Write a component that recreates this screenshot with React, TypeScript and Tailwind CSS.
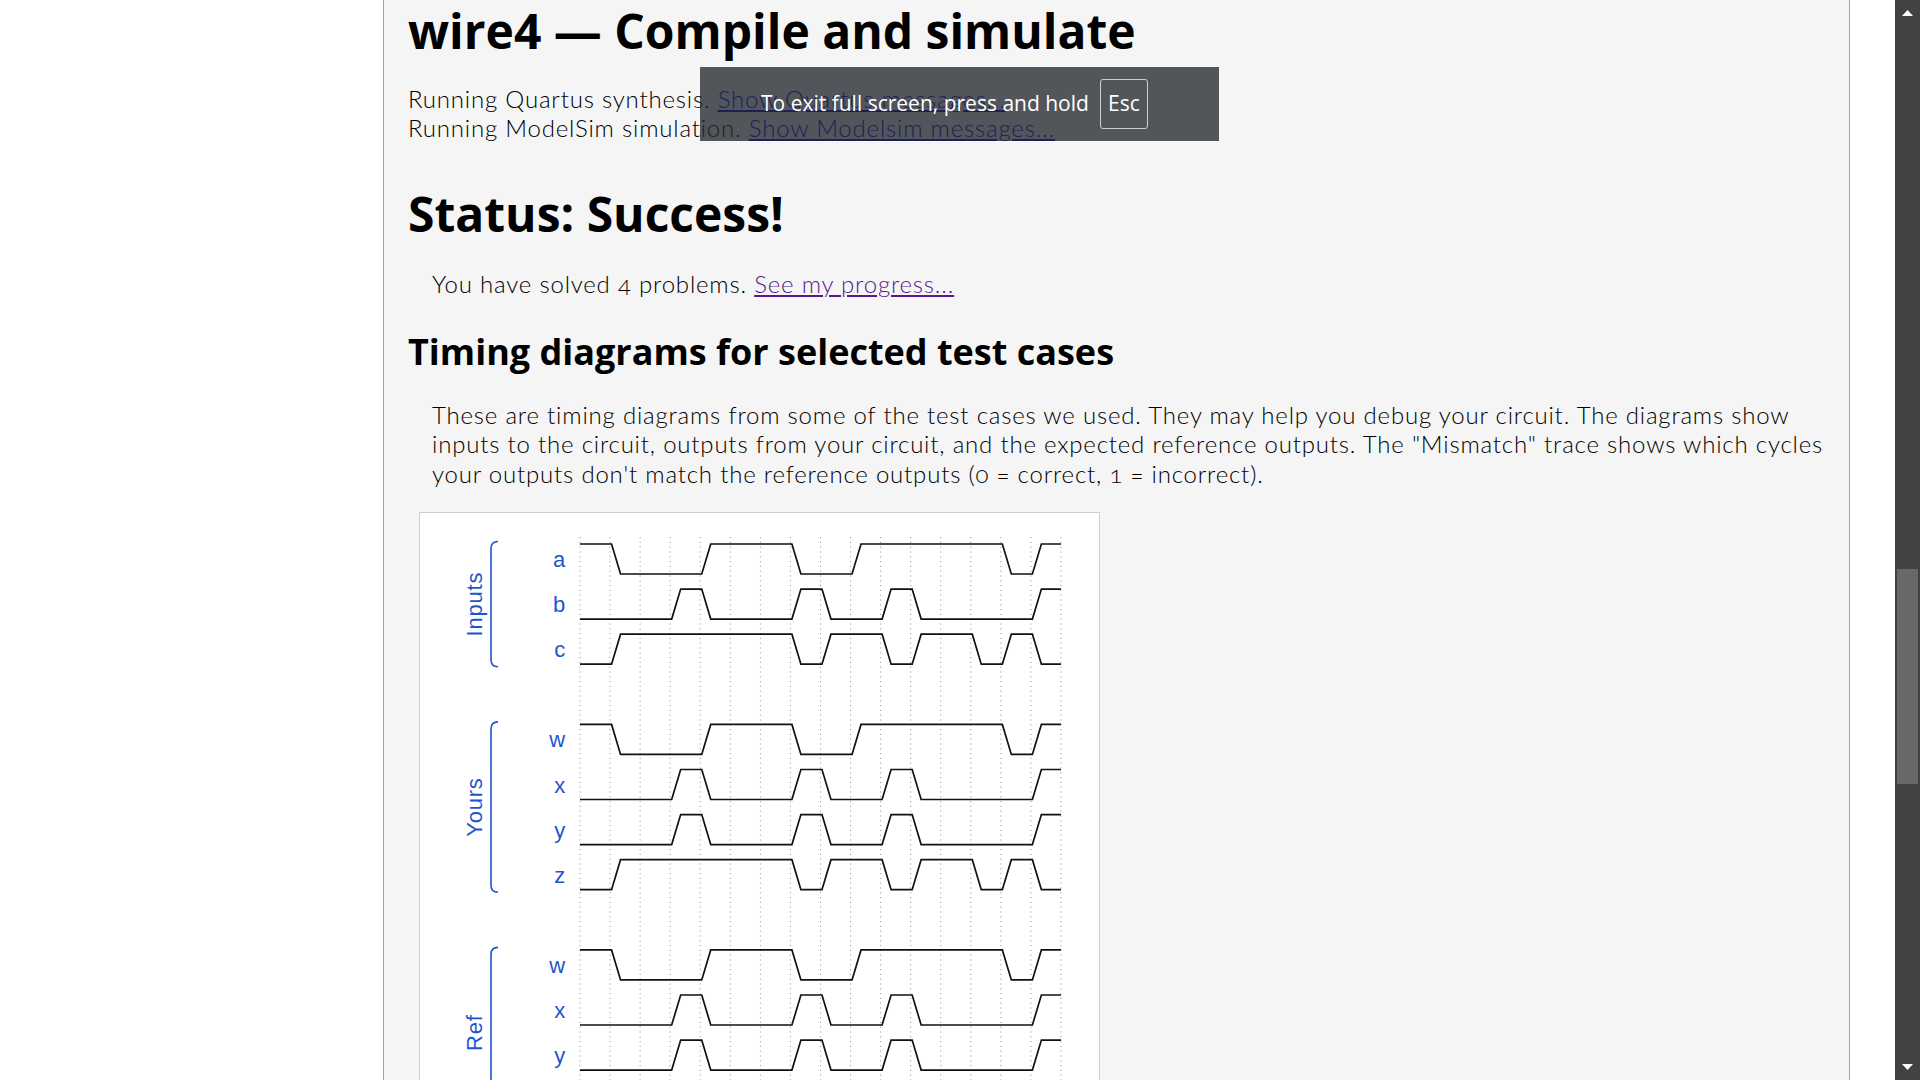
import React from "react";

const GX0 = 160;
const GP = 30.06;
const ROW0 = 31;
const PITCH = 45.1;
const AMP = 30;
const BLUE = "#1c56cc";

const gx = (i: number) => GX0 + GP * i;
const rowTop = (k: number) => ROW0 + PITCH * k;

const a = [1, 0, 0, 0, 1, 1, 1, 0, 0, 1, 1, 1, 1, 1, 0, 1];
const b = [0, 0, 0, 1, 0, 0, 0, 1, 0, 0, 1, 0, 0, 0, 0, 1];
const c = [0, 1, 1, 1, 1, 1, 1, 0, 1, 1, 0, 1, 1, 0, 1, 0];
const zero = Array(16).fill(0);

const groups = [
  { name: "Inputs", start: 0, rows: [["a", a], ["b", b], ["c", c]] as [string, number[]][] },
  { name: "Yours", start: 4, rows: [["w", a], ["x", b], ["y", b], ["z", c]] as [string, number[]][] },
  { name: "Ref", start: 9, rows: [["w", a], ["x", b], ["y", b], ["z", c]] as [string, number[]][] },
  { name: "Mismatch", start: 14, rows: [["", zero]] as [string, number[]][] },
];

function wavePath(vals: number[], k: number) {
  const top = rowTop(k);
  const yOf = (v: number) => (v ? top : top + AMP);
  let d = `M${gx(0)} ${yOf(vals[0])}`;
  for (let i = 1; i < vals.length; i++) {
    if (vals[i] !== vals[i - 1]) {
      d += ` L${gx(i) + 1.5} ${yOf(vals[i - 1])} L${gx(i) + 10.5} ${yOf(vals[i])}`;
    }
  }
  d += ` L${gx(16)} ${yOf(vals[vals.length - 1])}`;
  return d;
}

function TimingDiagram() {
  const height = 760;
  return (
    <svg width={679} height={height} className="block">
      {/* grid */}
      {Array.from({ length: 17 }).map((_, i) => (
        <line
          key={i}
          x1={gx(i)}
          x2={gx(i)}
          y1={24}
          y2={height}
          stroke="#a0a0a0"
          strokeWidth={1}
          strokeDasharray="1.2 3.6"
        />
      ))}

      {groups.map((g) => {
        const top = rowTop(g.start);
        const bottom = rowTop(g.start + g.rows.length - 1) + AMP;
        const mid = (top + bottom) / 2;
        return (
          <g key={g.name}>
            <text
              x={62}
              y={mid}
              transform={`rotate(-90 62 ${mid})`}
              textAnchor="middle"
              fontFamily="'Liberation Sans', Arial, sans-serif"
              fontSize={22}
              fill={BLUE}
            >
              {g.name}
            </text>
            <path
              d={`M78 ${top - 2.5} Q71 ${top - 2.5} 71 ${top + 4.5} L71 ${bottom - 4.5} Q71 ${bottom + 2.5} 78 ${bottom + 2.5}`}
              fill="none"
              stroke={BLUE}
              strokeWidth={1.6}
            />
            {g.rows.map(([label, vals], r) => {
              const k = g.start + r;
              return (
                <g key={k}>
                  <text
                    x={146}
                    y={rowTop(k) + AMP / 2 + 8}
                    textAnchor="end"
                    fontFamily="'Liberation Sans', Arial, sans-serif"
                    fontSize={22}
                    fill={BLUE}
                  >
                    {label}
                  </text>
                  <path d={wavePath(vals, k)} fill="none" stroke="#111" strokeWidth={1.7} />
                </g>
              );
            })}
          </g>
        );
      })}
    </svg>
  );
}

export default function App() {
  return (
    <div className="relative flex h-screen w-full overflow-hidden bg-white text-black">
      <div className="w-[383px] shrink-0" />

      <main className="w-[1467px] shrink-0 border-x border-[#a3a3a3] bg-[#f5f5f5] px-[24px] font-['Lato',sans-serif] text-[24px] font-light tracking-[0.8px] oldstyle-nums">
        <h1 className="mt-[2px] font-['Open_Sans',sans-serif] text-[48px] font-bold leading-[58px] tracking-normal lining-nums">
          wire4 — Compile and simulate
        </h1>

        <div className="mt-[24px] leading-[29px]">
          Running Quartus synthesis.{" "}
          <a href="#" className="text-[#0000ee] underline">
            Show Quartus messages...
          </a>
          <br />
          Running ModelSim simulation.{" "}
          <a href="#" className="text-[#0000ee] underline">
            Show Modelsim messages...
          </a>
        </div>

        <h1 className="mt-[43px] font-['Open_Sans',sans-serif] text-[48px] font-bold leading-[58px] tracking-normal lining-nums">
          Status: Success!
        </h1>

        <p className="mt-[26px] ml-[24px] leading-[29px]">
          You have solved 4 problems.{" "}
          <a href="#" className="text-[#551a8b] underline">
            See my progress...
          </a>
        </p>

        <h2 className="mt-[32px] font-['Open_Sans',sans-serif] text-[36px] font-bold leading-[44px] tracking-normal lining-nums">
          Timing diagrams for selected test cases
        </h2>

        <p className="mt-[26px] ml-[24px] leading-[29.4px]">
          These are timing diagrams from some of the test cases we used. They may help you debug your
          circuit. The diagrams show inputs to the circuit, outputs from your circuit, and the expected
          reference outputs. The "Mismatch" trace shows which cycles your outputs don't match the
          reference outputs (0 = correct, 1 = incorrect).
        </p>

        <div className="mt-[24px] ml-[11px] w-[681px] border border-[#cfcfcf] bg-white">
          <TimingDiagram />
        </div>
      </main>

      <div className="w-[45px] shrink-0" />

      {/* scrollbar */}
      <div className="relative w-[25px] shrink-0 bg-[#424242]">
        <svg className="absolute left-[7px] top-[10px]" width="11" height="6" viewBox="0 0 11 6">
          <path d="M5.5 0 L11 6 L0 6 Z" fill="#fff" />
        </svg>
        <div className="absolute left-[2px] top-[569px] h-[215px] w-[21px] bg-[#686868]" />
        <svg className="absolute left-[7px] bottom-[10px]" width="11" height="6" viewBox="0 0 11 6">
          <path d="M0 0 L11 0 L5.5 6 Z" fill="#fff" />
        </svg>
      </div>

      {/* fullscreen notice */}
      <div className="absolute left-[700px] top-[67px] flex h-[74px] w-[519px] items-center gap-[11px] bg-[rgba(36,40,46,0.78)] pl-[61px] font-['Open_Sans',sans-serif] text-[21px] text-white">
        <span>To exit full screen, press and hold</span>
        <span className="flex h-[50px] w-[48px] items-center justify-center rounded-[3px] border border-[#d0d0d0]">
          Esc
        </span>
      </div>
    </div>
  );
}
